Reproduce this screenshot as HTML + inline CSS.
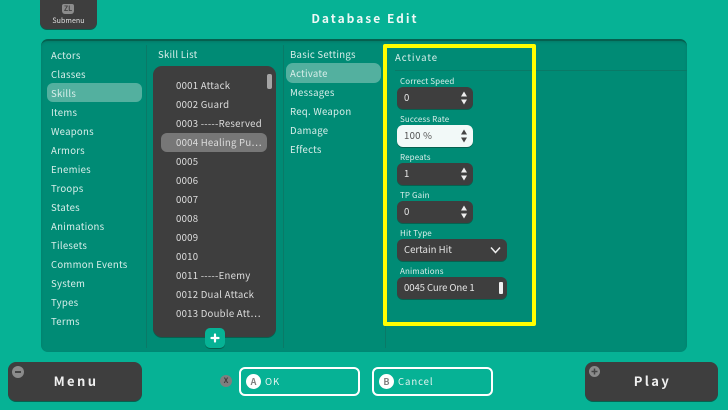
<!DOCTYPE html>
<html><head><meta charset="utf-8">
<style>
html,body{margin:0;padding:0;width:728px;height:410px;overflow:hidden;background:#06b295}
body{position:relative;font-family:"Noto Sans CJK JP","Liberation Sans",sans-serif;color:#e3f3ef;font-size:9.6px;letter-spacing:.25px}
div{position:absolute;box-sizing:border-box;white-space:nowrap}
.t{height:16px;line-height:16px}
.l{color:#d8eeea}
.g{color:#ddd}
.sm{font-size:8px;letter-spacing:.12px}
.f{background:#3e3e3e;border-radius:6px;box-shadow:0 1px 0 #06614f;color:#e5e5e5;height:22px;line-height:21px}
.s{background:#0a7a67;width:1px}
svg{position:absolute}
</style></head><body>

<div style="left:40px;top:-10px;width:57px;height:39px;background:#3e3e3e;border-radius:7px;box-shadow:0 1px 0 #06614f"></div>
<div style="left:62px;top:4px;width:12px;height:10px;background:#8c8c8c;border-radius:2px 2px 3px 3px;font-size:7px;line-height:10px;text-align:center;color:#444;letter-spacing:0;font-weight:700">ZL</div>
<div class="t" style="left:40px;top:13px;width:57px;text-align:center;font-size:7px;letter-spacing:.1px;color:#e0e0e0">Submenu</div>
<div class="t" style="left:265px;top:11px;width:200px;text-align:center;font-size:12px;letter-spacing:2px;font-weight:700;color:#eef8f6">Database Edit</div>

<div style="left:41px;top:39px;width:646px;height:313px;border-radius:7px;background:#008b75;border-top:2px solid #05604f;box-shadow:inset 0 1px 2px #047a66"></div>
<div class="s" style="left:146px;top:45px;height:303px"></div>
<div class="s" style="left:283px;top:45px;height:303px"></div>
<div class="s" style="left:385px;top:45px;height:303px"></div>
<div class="s" style="left:395px;top:70px;width:292px;height:1px"></div>

<div style="left:47px;top:83px;width:95px;height:19px;border-radius:6px;background:#53b09f"></div>
<div class="t l" style="left:51px;top:47px">Actors</div>
<div class="t l" style="left:51px;top:66px">Classes</div>
<div class="t l" style="left:51px;top:85px">Skills</div>
<div class="t l" style="left:51px;top:104px">Items</div>
<div class="t l" style="left:51px;top:123px">Weapons</div>
<div class="t l" style="left:51px;top:142px">Armors</div>
<div class="t l" style="left:51px;top:161px">Enemies</div>
<div class="t l" style="left:51px;top:180px">Troops</div>
<div class="t l" style="left:51px;top:199px">States</div>
<div class="t l" style="left:51px;top:218px">Animations</div>
<div class="t l" style="left:51px;top:237px">Tilesets</div>
<div class="t l" style="left:51px;top:256px">Common Events</div>
<div class="t l" style="left:51px;top:275px">System</div>
<div class="t l" style="left:51px;top:294px">Types</div>
<div class="t l" style="left:51px;top:313px">Terms</div>

<div class="t l" style="left:158px;top:46px">Skill List</div>
<div style="left:153px;top:66px;width:123px;height:271px;border-radius:9px;background:#3e3e3e;box-shadow:0 1px 0 #06614f"></div>
<div style="left:267px;top:74px;width:5px;height:15px;border-radius:2px;background:#a5a5a5"></div>
<div style="left:161px;top:133px;width:106px;height:19px;border-radius:6px;background:#777"></div>
<div class="t g" style="left:176px;top:77px">0001 Attack</div>
<div class="t g" style="left:176px;top:96px">0002 Guard</div>
<div class="t g" style="left:176px;top:115px">0003 -----Reserved</div>
<div class="t g" style="left:176px;top:134px">0004 Healing Pu…</div>
<div class="t g" style="left:176px;top:153px">0005</div>
<div class="t g" style="left:176px;top:172px">0006</div>
<div class="t g" style="left:176px;top:191px">0007</div>
<div class="t g" style="left:176px;top:210px">0008</div>
<div class="t g" style="left:176px;top:229px">0009</div>
<div class="t g" style="left:176px;top:248px">0010</div>
<div class="t g" style="left:176px;top:267px">0011 -----Enemy</div>
<div class="t g" style="left:176px;top:286px">0012 Dual Attack</div>
<div class="t g" style="left:176px;top:305px">0013 Double Att…</div>
<div style="left:205px;top:328px;width:20px;height:20px;border-radius:5px;background:#06b295;box-shadow:0 1px 0 #06614f"></div>
<svg style="left:205px;top:328px" width="20" height="20"><path d="M10 6.5V13.5M6.5 10H13.5" stroke="#fff" stroke-width="2.2" stroke-linecap="round"/></svg>

<div style="left:286px;top:63px;width:95px;height:20px;border-radius:7px;background:#53b09f"></div>
<div class="t l" style="left:290px;top:46px">Basic Settings</div>
<div class="t l" style="left:290px;top:65px">Activate</div>
<div class="t l" style="left:290px;top:84px">Messages</div>
<div class="t l" style="left:290px;top:103px">Req. Weapon</div>
<div class="t l" style="left:290px;top:122px">Damage</div>
<div class="t l" style="left:290px;top:141px">Effects</div>

<div style="left:383px;top:44px;width:153px;height:282px;border:4px solid #ffff00;border-radius:2px"></div>
<div class="t l" style="left:395px;top:49px;letter-spacing:.9px">Activate</div>

<div class="t l sm" style="left:400px;top:74px">Correct Speed</div>
<div class="f" style="left:397px;top:87px;width:76px;padding-left:7px">0</div>
<div class="t l sm" style="left:400px;top:112px">Success Rate</div>
<div class="f" style="left:397px;top:125px;width:76px;padding-left:7px;background:#f2f9f8;color:#555">100 %</div>
<div class="t l sm" style="left:400px;top:150px">Repeats</div>
<div class="f" style="left:397px;top:163px;width:76px;padding-left:7px">1</div>
<div class="t l sm" style="left:400px;top:188px">TP Gain</div>
<div class="f" style="left:397px;top:201px;width:76px;padding-left:7px">0</div>
<div class="t l sm" style="left:400px;top:226px">Hit Type</div>
<div class="f" style="left:397px;top:239px;width:110px;padding-left:7px;letter-spacing:0">Certain Hit</div>
<div class="t l sm" style="left:400px;top:264px">Animations</div>
<div class="f" style="left:397px;top:277px;width:110px;padding-left:7px;letter-spacing:-.1px">0045 Cure One 1</div>

<svg style="left:460px;top:91px" width="8" height="14"><path d="M4 .5L7 5.5H1ZM4 13.5L1 8.5H7Z" fill="#eee"/></svg>
<svg style="left:460px;top:129px" width="8" height="14"><path d="M4 .5L7 5.5H1ZM4 13.5L1 8.5H7Z" fill="#444"/></svg>
<svg style="left:460px;top:167px" width="8" height="14"><path d="M4 .5L7 5.5H1ZM4 13.5L1 8.5H7Z" fill="#eee"/></svg>
<svg style="left:460px;top:205px" width="8" height="14"><path d="M4 .5L7 5.5H1ZM4 13.5L1 8.5H7Z" fill="#eee"/></svg>
<svg style="left:490px;top:245px" width="11" height="10"><path d="M1 2.5L5.5 7.5L10 2.5" fill="none" stroke="#eee" stroke-width="1.5"/></svg>
<div style="left:499px;top:282px;width:4px;height:12px;background:#f0f0f0;border-radius:1px"></div>

<div style="left:8px;top:362px;width:134px;height:39px;border-radius:8px;background:#3e3e3e;box-shadow:0 1px 0 #06614f"></div>
<div style="left:12px;top:366px;width:12px;height:12px;border-radius:50%;background:#8b8b8b"></div>
<div style="left:15px;top:371px;width:6px;height:2px;background:#444"></div>
<div class="t" style="left:8px;top:373px;width:134px;padding-left:2px;text-align:center;font-size:13px;letter-spacing:2.4px;font-weight:700;color:#f0f0f0">Menu</div>

<div style="left:585px;top:362px;width:133px;height:39px;border-radius:8px;background:#3e3e3e;box-shadow:0 1px 0 #06614f"></div>
<div style="left:589px;top:366px;width:11px;height:11px;border-radius:50%;background:#8b8b8b"></div>
<svg style="left:589px;top:366px" width="11" height="11"><path d="M5.5 2.5V8.5M2.5 5.5H8.5" stroke="#444" stroke-width="1.5"/></svg>
<div class="t" style="left:585px;top:373px;width:133px;padding-left:2px;text-align:center;font-size:13px;letter-spacing:2.4px;font-weight:700;color:#f0f0f0">Play</div>

<div style="left:220px;top:375px;width:12px;height:12px;border-radius:50%;background:#7f7f7f;font-size:7.5px;line-height:12px;text-align:center;color:#3c3c3c;letter-spacing:0;font-weight:700">X</div>

<div style="left:239px;top:367px;width:121px;height:29px;border:2px solid #fff;border-radius:6px"></div>
<div style="left:246px;top:374px;width:15px;height:15px;border-radius:50%;background:#fff;font-size:9px;line-height:15px;text-align:center;color:#808080;letter-spacing:0;font-weight:700">A</div>
<div class="t" style="left:265px;top:373px;letter-spacing:.9px">OK</div>

<div style="left:372px;top:367px;width:121px;height:29px;border:2px solid #fff;border-radius:6px"></div>
<div style="left:379px;top:374px;width:15px;height:15px;border-radius:50%;background:#fff;font-size:9px;line-height:15px;text-align:center;color:#808080;letter-spacing:0;font-weight:700">B</div>
<div class="t" style="left:398px;top:373px;letter-spacing:.9px">Cancel</div>
</body></html>
